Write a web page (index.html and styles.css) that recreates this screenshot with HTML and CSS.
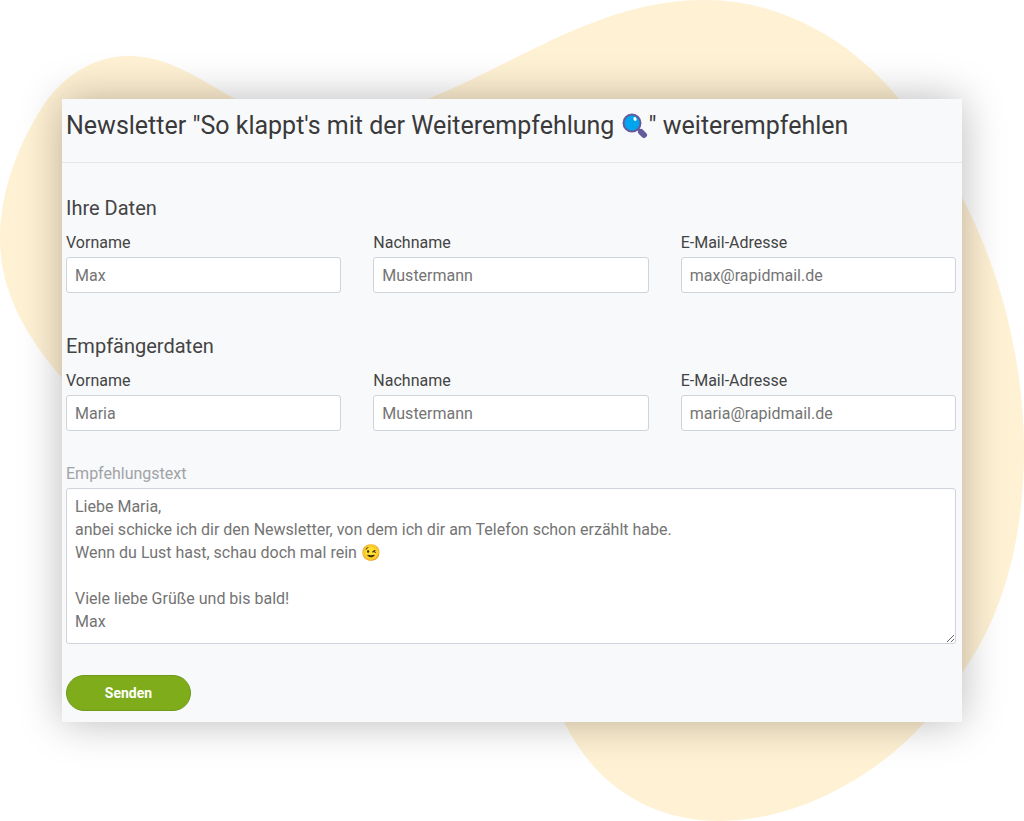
FILE: index.html
```
<!DOCTYPE html>
<html lang="de">
<head>
<meta charset="UTF-8" />
<meta name="viewport" content="width=device-width, initial-scale=1" />
<title>Newsletter weiterempfehlen</title>
<link rel="stylesheet" href="styles.css">
</head>
<body>
  <main class="stage">
    <svg class="blob" viewBox="0 0 1024 821" preserveAspectRatio="none" aria-hidden="true">
      <path d="M0 235 C1 188 20 140 45 103 C67 72 98 56 128 56 C168 56 198 78 235 99 C300 135 360 130 428 99 C520 62 600 0 705 0 C785 0 855 44 899 99 C926 131 948 163 962 197 C1000 270 1024 360 1024 450 C1024 545 1000 620 962 673 C950 692 938 708 925 722 C870 783 790 821 720 821 C650 821 595 785 564 722 C530 655 500 560 400 540 C270 510 130 470 62 378 C25 335 -1 290 0 235 Z" />
    </svg>

    <form class="card">
      <header class="card-header">
        <h1>Newsletter "So klappt's mit der Weiterempfehlung
          <svg class="lens" viewBox="0 0 26 26" aria-hidden="true">
            <path d="M16 16 L19 19" stroke="#655b9c" stroke-width="3" />
            <path d="M19 19 L22 22" stroke="#655b9c" stroke-width="6" stroke-linecap="round" />
            <circle cx="10" cy="10" r="8.500" fill="#00a4ef" stroke="#655b9c" stroke-width="2" />
            <ellipse cx="13" cy="6" rx="1.500" ry="2" fill="#fff" transform="rotate(-30 13 6)" />
          </svg>" weiterempfehlen</h1>
      </header>

      <div class="card-body">
        <section class="group">
          <h2>Ihre Daten</h2>
          <div class="row">
            <div class="field">
              <label for="senderFirst">Vorname</label>
              <input type="text" id="senderFirst" value="Max" />
            </div>
            <div class="field">
              <label for="senderLast">Nachname</label>
              <input type="text" id="senderLast" value="Mustermann" />
            </div>
            <div class="field">
              <label for="senderMail">E-Mail-Adresse</label>
              <input type="email" id="senderMail" value="max@rapidmail.de" />
            </div>
          </div>
        </section>

        <section class="group">
          <h2>Empfängerdaten</h2>
          <div class="row">
            <div class="field">
              <label for="recipientFirst">Vorname</label>
              <input type="text" id="recipientFirst" value="Maria" />
            </div>
            <div class="field">
              <label for="recipientLast">Nachname</label>
              <input type="text" id="recipientLast" value="Mustermann" />
            </div>
            <div class="field">
              <label for="recipientMail">E-Mail-Adresse</label>
              <input type="email" id="recipientMail" value="maria@rapidmail.de" />
            </div>
          </div>
        </section>

        <div class="field message">
          <label for="message">Empfehlungstext</label>
          <textarea id="message" spellcheck="false">Liebe Maria,
anbei schicke ich dir den Newsletter, von dem ich dir am Telefon schon erzählt habe.
Wenn du Lust hast, schau doch mal rein 😉

Viele liebe Grüße und bis bald!
Max</textarea>
        </div>

        <button type="submit" class="submit-btn">Senden</button>
      </div>
    </form>
  </main>
</body>
</html>
```
FILE: styles.css
```
* {
  box-sizing: border-box;
}
body {
  margin: 0;
  background-color: #fff;
  color: #444;
  font-family: Roboto, "Liberation Sans", sans-serif;
  font-size: 16px;
}
.stage {
  position: relative;
  padding: 99px 62px;
}
.blob {
  position: absolute;
  top: 0;
  left: 0;
  width: 100%;
  height: 100%;
  fill: #fff1d3;
}
.card {
  position: relative;
  background-color: #f8f9fb;
  box-shadow: 0 0 40px rgba(0, 0, 0, 0.28);
}
.card-header {
  padding: 11px 4px 20px;
  border-bottom: 1px solid #e3e6ea;
}
h1 {
  margin: 0;
  font-size: 25px;
  font-weight: 400;
  line-height: 32px;
  color: #3a3a3a;
}
.lens {
  width: 26px;
  height: 26px;
  margin: 0 1px;
  vertical-align: -5px;
}
.card-body {
  padding: 24px 6px 11px 4px;
}
.group {
  margin-bottom: 32px;
}
h2 {
  margin: 0 0 11px;
  padding-top: 8px;
  font-size: 20px;
  font-weight: 400;
  line-height: 26px;
}
.row {
  display: grid;
  grid-template-columns: repeat(3, 1fr);
  gap: 32px;
}
.field {
  display: flex;
  flex-direction: column;
}
label {
  margin-bottom: 3px;
  line-height: 22px;
}
input,
textarea {
  width: 100%;
  padding: 6px 8px;
  border: 1px solid #cfd4da;
  border-radius: 3px;
  background-color: #fff;
  color: #747474;
  font: inherit;
  line-height: 23px;
}
input {
  height: 36px;
}
.message label {
  color: #a0a3a6;
}
textarea {
  height: 156px;
  resize: vertical;
}
.submit-btn {
  margin-top: 31px;
  width: 125px;
  height: 36px;
  border: 1px solid #71991a;
  border-radius: 18px;
  background-color: #7eac1a;
  color: #fff;
  font: bold 14px Roboto, "Liberation Sans", sans-serif;
  cursor: pointer;
}
.submit-btn:hover {
  background-color: #71991a;
}
```
